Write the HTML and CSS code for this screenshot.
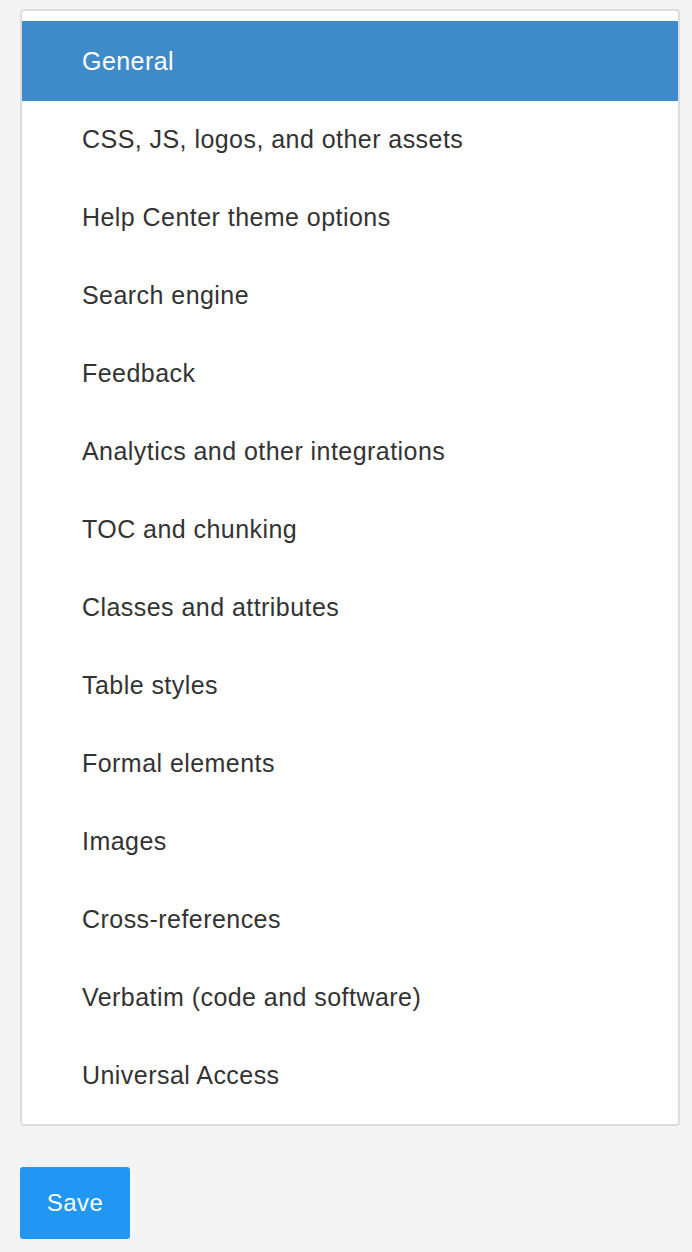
FILE: index.html
```html
<!DOCTYPE html>
<html>
<head>
<meta charset="utf-8">
<link rel="stylesheet" href="styles.css">
</head>
<body>
<div class="page">
  <nav class="card">
    <ul class="menu">
      <li class="item active">General</li>
      <li class="item">CSS, JS, logos, and other assets</li>
      <li class="item">Help Center theme options</li>
      <li class="item">Search engine</li>
      <li class="item">Feedback</li>
      <li class="item">Analytics and other integrations</li>
      <li class="item">TOC and chunking</li>
      <li class="item">Classes and attributes</li>
      <li class="item">Table styles</li>
      <li class="item">Formal elements</li>
      <li class="item">Images</li>
      <li class="item">Cross-references</li>
      <li class="item">Verbatim (code and software)</li>
      <li class="item">Universal Access</li>
    </ul>
  </nav>
  <button class="save">Save</button>
</div>
</body>
</html>
```
FILE: styles.css
```css
html, body {
  margin: 0;
  padding: 0;
  background: #f4f4f4;
}
body {
  font-family: "Liberation Sans", Arial, sans-serif;
  color: #333;
}
.page {
  padding: 9px 12px 0 20px;
  display: flex;
  flex-direction: column;
  align-items: flex-start;
}
.card {
  align-self: stretch;
  background: #fff;
  border: 2px solid #dddddd;
  border-radius: 4px;
  padding: 11px 0 10px;
}
.menu {
  list-style: none;
  margin: 0;
  padding: 0;
}
.item {
  box-sizing: border-box;
  height: 78px;
  display: flex;
  align-items: center;
  padding: 0 0 0 60px;
  font-size: 25px;
  letter-spacing: 0.45px;
  color: #333;
}
.item.active {
  background: #3f8bc9;
  color: #fff;
  height: 80px;
  margin: -1px 0;
}
.save {
  margin-top: 41px;
  width: 110px;
  height: 72px;
  border: none;
  border-radius: 3px;
  background: #2196f3;
  color: #fff;
  font-family: "Liberation Sans", Arial, sans-serif;
  font-size: 24px;
  letter-spacing: 0.5px;
  padding: 0;
}
```
